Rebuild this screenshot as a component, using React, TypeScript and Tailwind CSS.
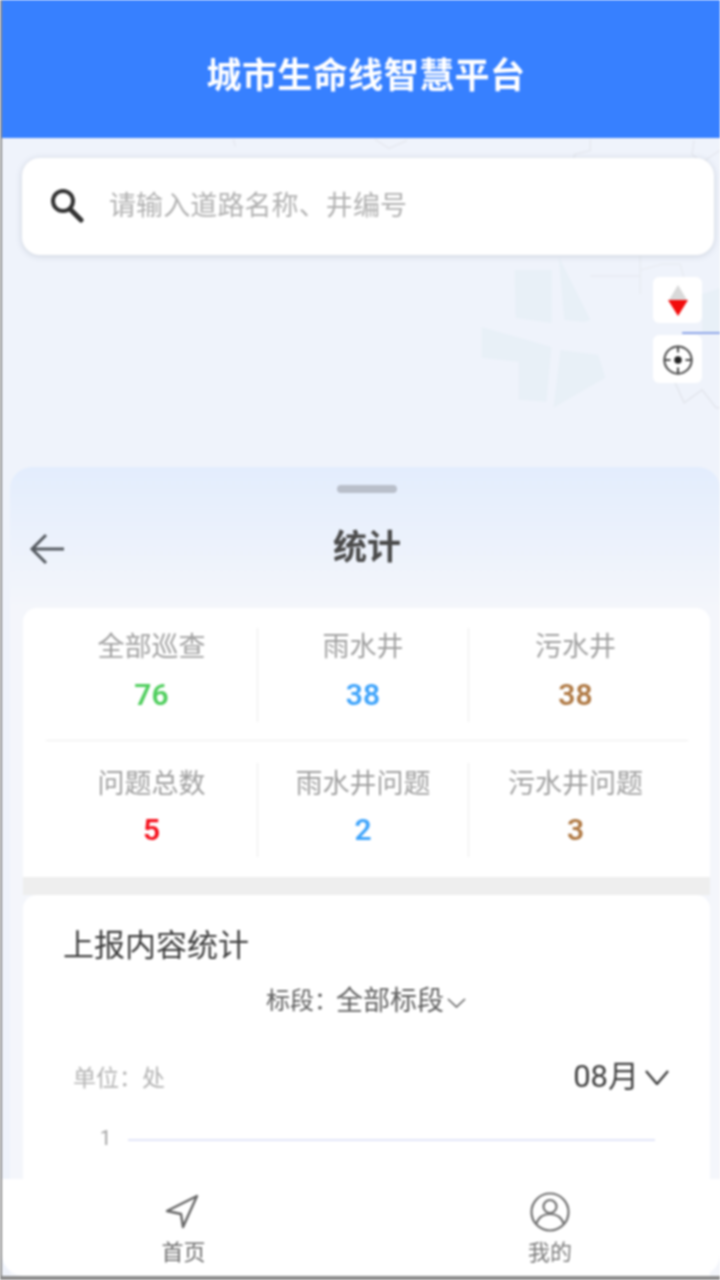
const cjk = "font-['Roboto','Noto_Sans_CJK_SC',sans-serif]";

const stats = [
  [
    { label: "全部巡查", value: "76", color: "text-[#4fce5d]" },
    { label: "雨水井", value: "38", color: "text-[#3fa4fb]" },
    { label: "污水井", value: "38", color: "text-[#b07a45]" },
  ],
  [
    { label: "问题总数", value: "5", color: "text-[#f5101c]" },
    { label: "雨水井问题", value: "2", color: "text-[#3fa4fb]" },
    { label: "污水井问题", value: "3", color: "text-[#b07a45]" },
  ],
];

function MapShapes() {
  return (
    <svg className="absolute inset-0 h-full w-full" viewBox="0 0 720 342" fill="none">
      <path d="M514 132h37v53l-36-5zM558 118l32 64-6 2-20-2z" fill="#e8f0f7" />
      <path d="M481 189l70 20-5 55-28-2v-38l-37-4zM560 212l38 5 7 23-52 30z" fill="#e8f0f7" />
      <path d="M702 156l18-6v44h-18z" fill="#e8f0f7" />
      <path d="M232 1l2 7M374 1l14 9 18-8M590 1v11l-16 4v4M694 2l-2 14 10 8 18-12" stroke="#e6e9f0" strokeWidth="1.5" />
      <path d="M590 138h50M640 118v38M640 132l22-6h18l4 14" stroke="#e9ecf2" strokeWidth="1.5" />
      <path d="M682 195h38" stroke="#8ea6e8" strokeWidth="2" />
      <path d="M675 245l9 20 18-13 14 18h4" stroke="#e3e6ed" strokeWidth="1.5" />
    </svg>
  );
}

function CompassIcon() {
  return (
    <svg width="20" height="31" viewBox="0 0 20 31">
      <path d="M10 0L19 15H1z" fill="#d9d9d9" />
      <path d="M0 15h20L10 31z" fill="#f20d0d" />
    </svg>
  );
}

function LocateIcon() {
  return (
    <svg width="30" height="30" viewBox="0 0 32 32" fill="none" stroke="#4a4a4a" strokeWidth="2.2">
      <circle cx="16" cy="16" r="14.5" />
      <path d="M16 1v7M16 24v7M1 16h7M24 16h7" />
      <circle cx="16" cy="16" r="4" fill="#222" stroke="none" />
    </svg>
  );
}

function StatCell({
  label,
  value,
  color,
  className,
  row,
}: {
  label: string;
  value: string;
  color: string;
  className: string;
  row: number;
}) {
  return (
    <div className={`flex h-[94px] flex-col items-center ${className}`}>
      <span className={`text-[27px] leading-[36px] text-[#a0a0a0] ${row === 0 ? "mt-px" : "mt-[3px]"}`}>{label}</span>
      <span className={`text-[30px] leading-[36px] font-semibold ${color} ${row === 0 ? "mt-3" : "mt-[10px]"}`}>{value}</span>
    </div>
  );
}

function StatRow({ row }: { row: number }) {
  return (
    <div className="flex">
      <StatCell {...stats[row][0]} row={row} className="w-[211px]" />
      <StatCell {...stats[row][1]} row={row} className="w-[211px] border-l border-[#ececec]" />
      <StatCell {...stats[row][2]} row={row} className="flex-1 border-l border-[#ececec] pr-[6px]" />
    </div>
  );
}

export default function App() {
  return (
    <div className={`relative flex h-[1280px] w-[720px] flex-col overflow-hidden bg-[#8a8a8a] pb-1 pl-[2px] blur-[0.8px] ${cjk}`}>
      {/* Header */}
      <header className="flex h-[138px] shrink-0 items-center justify-center bg-[#3780ff] pt-4 pl-[10px]">
        <h1 className="text-[35px] font-bold tracking-[0.45px] text-white">城市生命线智慧平台</h1>
      </header>

      {/* Map and bottom sheet */}
      <main className="relative flex min-h-0 flex-1 flex-col bg-[#eff3fb]">
        <div className="absolute top-0 right-0 left-0 h-[342px]">
          <MapShapes />
        </div>

        <div className="relative mt-5 mr-[6px] ml-5 flex h-[97px] shrink-0 items-center rounded-[18px] bg-white pl-[28px] shadow-[0_1px_6px_rgba(100,110,130,0.25)]">
          <svg width="34" height="36" viewBox="0 0 34 36" fill="none" stroke="#333" className="mr-[25px] mb-1">
            <circle cx="13" cy="14" r="10" strokeWidth="4" />
            <path d="M20 22l11 11" strokeWidth="5" strokeLinecap="round" />
          </svg>
          <span className="text-[27px] tracking-[0.1px] text-[#b1b1b1]">请输入道路名称、井编号</span>
        </div>

        {/* Map controls */}
        <div className="absolute top-[139px] right-[18px] flex flex-col gap-[12px]">
          <div className="flex h-[46px] w-[49px] items-center justify-center rounded-md bg-white">
            <CompassIcon />
          </div>
          <div className="flex h-[48px] w-[49px] items-center justify-center rounded-md bg-white pt-px">
            <LocateIcon />
          </div>
        </div>

        {/* Sheet */}
        <section className="relative mt-[212px] ml-2 flex min-h-0 flex-1 flex-col overflow-hidden rounded-t-[22px] bg-[linear-gradient(180deg,#e3edfd_0%,#f4f6fb_140px,#f4f6fb_100%)]">
          <div className="mt-[18px] ml-[327px] h-2 w-[60px] shrink-0 rounded-full bg-[#b9bfca]" />
          <div className="relative flex h-[115px] shrink-0 items-center justify-center pb-1.5 pl-1">
            <svg width="36" height="32" viewBox="0 0 36 32" fill="none" stroke="#555a60" strokeWidth="3" className="absolute top-[40px] left-[19px]">
              <path d="M35 16H3M17 2L3 16l14 14" />
            </svg>
            <span className="text-[34px] font-bold text-[#4b4b4b]">统计</span>
          </div>

          <div className="mr-[10px] ml-[13px] flex min-h-0 flex-1 flex-col">
            {/* Summary card */}
            <div className="flex h-[269px] shrink-0 flex-col rounded-t-[14px] bg-white pt-5 pr-[22px] pl-[23px]">
              <StatRow row={0} />
              <div className="mt-[18px] mb-[22px] h-px bg-[#ececec]" />
              <StatRow row={1} />
            </div>
            <div className="h-[18px] shrink-0 bg-[#eeeeee]" />

            {/* Report chart card */}
            <div className="flex min-h-0 flex-1 flex-col rounded-t-[14px] bg-white pt-[29px] pr-[41px] pl-[40px]">
              <h2 className="text-[31px] leading-[44px] text-[#3f3f3f]">上报内容统计</h2>
              <div className="mt-[15px] flex items-center justify-center text-[#616161]">
                <span className="text-[24px] leading-[36px]">标段：</span>
                <span className="ml-[-2px] text-[27px] leading-[36px]">全部标段</span>
                <svg width="19" height="10" viewBox="0 0 19 10" fill="none" stroke="#616161" strokeWidth="1.6" className="mt-1 ml-[3px]">
                  <path d="M1 1l8.5 8L18 1" />
                </svg>
              </div>
              <div className="mt-[38px] flex items-center justify-between">
                <span className="ml-[10px] text-[23px] leading-[40px] text-[#b4b4b4]">单位：处</span>
                <span className="mb-[4px] flex items-center text-[31px] leading-[40px] text-[#3f3f3f]">
                  08月
                  <svg width="24" height="15" viewBox="0 0 24 15" fill="none" stroke="#3f3f3f" strokeWidth="2.4" className="ml-[6px]">
                    <path d="M1 1l11 13L23 1" />
                  </svg>
                </span>
              </div>
              <div className="mt-[25px] flex items-center">
                <span className="mb-1 ml-[37px] w-[28px] text-[20px] leading-[24px] text-[#a0a0a0]">1</span>
                <div className="h-[2px] w-[527px] bg-[#e2e5f8]" />
              </div>
            </div>
          </div>
        </section>

        {/* Bottom nav */}
        <nav className="absolute right-0 bottom-0 left-0 flex h-[97px] rounded-b-[22px] bg-white">
          <div className="flex w-[363px] flex-col items-center">
            <svg width="36" height="36" viewBox="0 0 36 36" fill="none" stroke="#666" strokeWidth="2.4" strokeLinejoin="round" className="mt-[15px] mr-[3px]">
              <path d="M33 2L3 17l14 3 2 13z" />
            </svg>
            <span className="mt-[7px] text-[22px] leading-[32px] text-[#6e6e6e]">首页</span>
          </div>
          <div className="flex flex-1 flex-col items-center pl-[15px]">
            <svg width="40" height="40" viewBox="0 0 40 40" fill="none" stroke="#707070" strokeWidth="2.2" className="mt-[13px]">
              <circle cx="20" cy="20" r="18.5" />
              <circle cx="20" cy="14.5" r="6.5" />
              <path d="M6 32c3-8 9-10 14-10s11 2 14 10" />
            </svg>
            <span className="mt-[5px] text-[22px] leading-[32px] text-[#7c7c7c]">我的</span>
          </div>
        </nav>
      </main>
    </div>
  );
}
